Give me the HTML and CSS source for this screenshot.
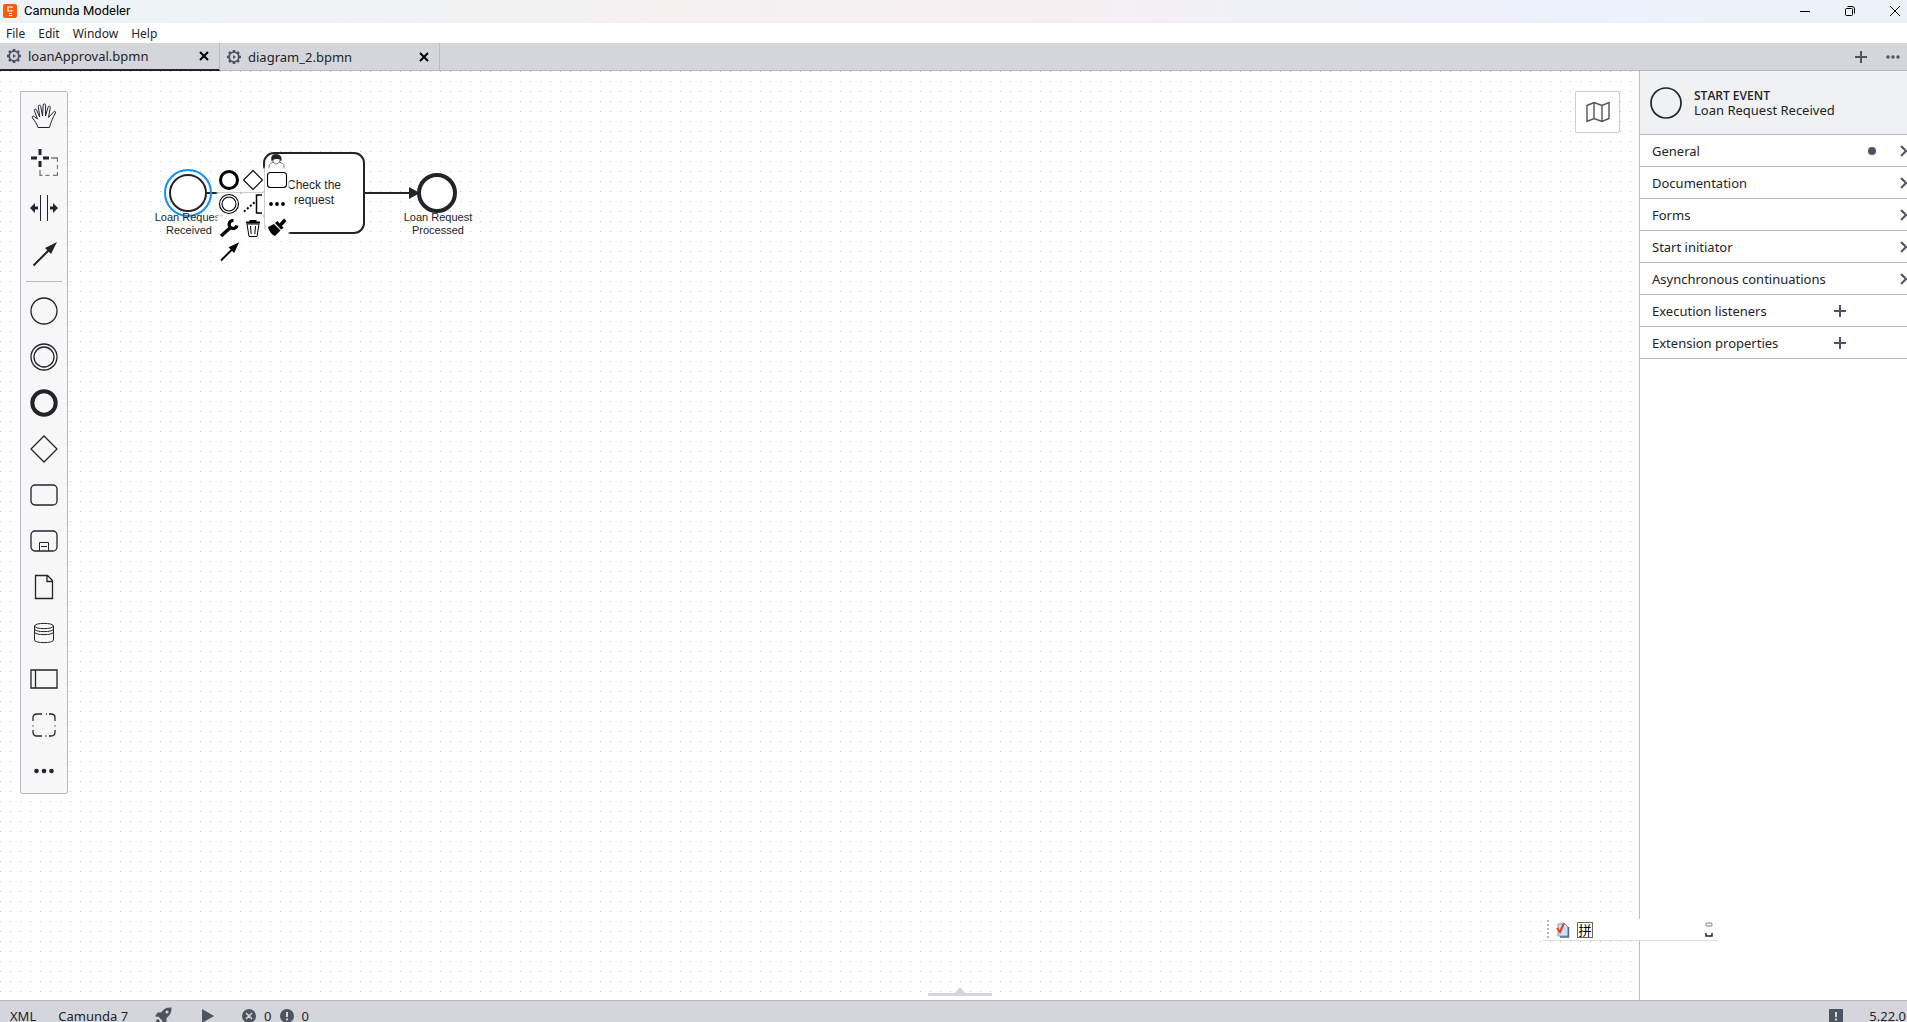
FILE: index.html
```html
<!DOCTYPE html>
<html lang="en">
<head>
    <meta charset="UTF-8">
    <meta name="viewport" content="width=device-width, initial-scale=1.0">
    <title>Camunda Modeler</title>
    <link rel="stylesheet" href="styles.css">
</head>
<body>
    <header class="title-bar">
        <svg class="app-logo" viewBox="0 0 14 14">
            <rect width="14" height="14" rx="2" fill="#fc5d0d"/>
            <path d="M9 4V3H5v4h4V6M6 9.500h3M6 11.500h3" fill="none" stroke="#fff" stroke-width="1.200"/>
        </svg>
        <span class="app-title">Camunda Modeler</span>
        <div class="window-controls">
            <button aria-label="Minimize"><svg width="12" height="12"><path d="M1 6.500h10"/></svg></button>
            <button aria-label="Restore"><svg width="12" height="12"><rect x="1.500" y="3.500" width="7" height="7" rx="1"/><path d="M3.500 1.500H8a2.500 2.500 0 0 1 2.500 2.500v4.500"/></svg></button>
            <button aria-label="Close"><svg width="12" height="12"><path d="M1 1l10 10M11 1L1 11"/></svg></button>
        </div>
    </header>

    <nav class="menu-bar">
        <button>File</button>
        <button>Edit</button>
        <button>Window</button>
        <button>Help</button>
    </nav>

    <div class="tab-bar">
        <div class="tab active">
            <svg class="gear" viewBox="0 0 16 16"><circle cx="8" cy="8" r="4.800"/><path class="teeth" d="M8 1v2M8 13v2M1 8h2M13 8h2M3 3l1.500 1.500M11.500 11.500L13 13M13 3l-1.500 1.500M4.500 11.500L3 13"/><path class="core" d="M7 6v4l3-2z"/></svg>
            <button class="tab-name">loanApproval.bpmn</button>
            <button class="tab-close" aria-label="Close loanApproval.bpmn"><svg width="10" height="10"><path d="M1 1l8 8M9 1L1 9"/></svg></button>
        </div>
        <div class="tab">
            <svg class="gear" viewBox="0 0 16 16"><circle cx="8" cy="8" r="4.800"/><path class="teeth" d="M8 1v2M8 13v2M1 8h2M13 8h2M3 3l1.500 1.500M11.500 11.500L13 13M13 3l-1.500 1.500M4.500 11.500L3 13"/><path class="core" d="M7 6v4l3-2z"/></svg>
            <button class="tab-name">diagram_2.bpmn</button>
            <button class="tab-close" aria-label="Close diagram_2.bpmn"><svg width="10" height="10"><path d="M1 1l8 8M9 1L1 9"/></svg></button>
        </div>
        <div class="tab-actions">
            <button aria-label="New tab"><svg width="12" height="12"><path d="M6 0v12M0 6h12" stroke="#4d5361" stroke-width="2"/></svg></button>
            <button aria-label="More tabs"><svg width="16" height="4" fill="#4d5361"><circle cx="3" cy="2" r="1.700"/><circle cx="8" cy="2" r="1.700"/><circle cx="13" cy="2" r="1.700"/></svg></button>
        </div>
    </div>

    <main class="workspace">
        <section class="canvas">
            <!-- process diagram -->
            <svg class="diagram" width="600" height="300">
                <g fill="none" stroke="#22242a" stroke-width="2">
                    <path d="M206 122h58M364 122h46"/>
                    <path d="M409 116v12l11-6z" fill="#22242a" stroke="none"/>
                    <circle cx="188" cy="122" r="18" fill="#fff"/>
                    <circle cx="188" cy="122" r="23" stroke="#1090fa"/>
                    <rect x="264" y="82" width="100" height="80" rx="10" fill="#fff"/>
                    <circle cx="437" cy="122" r="18" fill="#fff" stroke-width="4"/>
                </g>
                <!-- user task marker -->
                <path d="M269 98v-3c0-2 2-3 5-4M284 98v-3c0-2-2-3-5-4" fill="none" stroke="#777"/>
                <path d="M272 91c-2-5 0-8 4-8s7 3 5 8c-1-3-2-3-4-3s-4 0-5 3z" fill="#22242a"/>
                <path d="M273 89c0 3 2 4 3 4s4-1 4-4" fill="none" stroke="#777"/>
                <g class="event-label">
                    <text x="189" y="150">Loan Request</text>
                    <text x="189" y="163">Received</text>
                    <text x="438" y="150">Loan Request</text>
                    <text x="438" y="163">Processed</text>
                </g>
                <g class="task-label">
                    <text x="314" y="118">Check the</text>
                    <text x="314" y="133">request</text>
                </g>
            </svg>

            <div class="palette">
                <button aria-label="Hand tool"><svg viewBox="0 0 28 28"><path d="M8 25.500C7 22 5 19.500 2.500 16c-1-1.500.5-2.500 1.700-1.600L7.500 17 4.300 8.500C4 6.700 6 6.400 6.500 8l3.200 6.800L8.300 4.500c0-1.700 2-1.900 2.400-.2L12.500 14l.7-11c.2-1.600 2.400-1.500 2.400.2L15.500 14l2.600-9c.6-1.500 2.500-1 2.200.6L18.500 15.500l5.200-5.700c1-1.100 2.400-.2 1.800 1.200C22.500 16 21 20 19.500 25.500z" stroke-width="1"/></svg></button>
                <button aria-label="Lasso tool"><svg viewBox="0 0 28 28"><path d="M10 1v6M10 13v6M1 10h6M13 10h6" stroke-width="3"/><path d="M21 10h6.500v4M27.500 17v4M27.500 24v3.500H23M19.500 27.500h-4M12.500 27.500H10V22" stroke="#777"/></svg></button>
                <button aria-label="Space tool"><svg viewBox="0 0 28 28"><path d="M10.500 1v26M17.500 1v26" stroke-width="1"/><path d="M0 14l5-5v3.500h3v3H5V19zM28 14l-5-5v3.500h-3v3h3V19z" fill="#22242a" stroke="none"/></svg></button>
                <button aria-label="Connect"><svg viewBox="0 0 28 28"><path d="M3.500 25.500L19 10" stroke-width="2"/><path d="M27 2L15 8l6 6z" fill="#22242a" stroke="none"/></svg></button>
                <hr>
                <button aria-label="Start event"><svg viewBox="0 0 28 28"><circle cx="14" cy="14" r="13"/></svg></button>
                <button aria-label="Intermediate event"><svg viewBox="0 0 28 28"><circle cx="14" cy="14" r="13"/><circle cx="14" cy="14" r="10"/></svg></button>
                <button aria-label="End event"><svg viewBox="0 0 28 28"><circle cx="14" cy="14" r="11.700" stroke-width="4"/></svg></button>
                <button aria-label="Gateway"><svg viewBox="0 0 28 28"><path d="M14 1l13 13-13 13L1 14z"/></svg></button>
                <button aria-label="Task"><svg viewBox="0 0 28 28"><rect x="1" y="4" width="26" height="20" rx="4"/></svg></button>
                <button aria-label="Sub-process"><svg viewBox="0 0 28 28"><rect x="1" y="4" width="26" height="20" rx="4"/><path d="M9.500 24v-8.500h9V24M11 19.500h6" stroke-width="1"/></svg></button>
                <button aria-label="Data object"><svg viewBox="0 0 28 28"><path d="M5.500 2.500h12l5 5v18h-17zM17 3v5.500h5.500"/></svg></button>
                <button aria-label="Data store"><svg viewBox="0 0 28 28"><path d="M4.500 7v14c0 3.500 19 3.500 19 0V7M4.500 7c0-3.500 19-3.500 19 0s-19 3.500-19 0M4.500 10c0 3.500 19 3.500 19 0M4.500 13c0 3.500 19 3.500 19 0" stroke-width="1"/></svg></button>
                <button aria-label="Pool"><svg viewBox="0 0 28 28"><path d="M1 5h26v18H1zM5.500 5v18"/></svg></button>
                <button aria-label="Group"><svg viewBox="0 0 28 28"><path d="M3 10V7q0-4 4-4h5M16 3h1M19 3h2q4 0 4 4v3M25 14.500v1M25 19v2q0 4-4 4h-2M16.500 25h-1M12 25H7q-4 0-4-4v-2M3 15.500v-1"/></svg></button>
                <button aria-label="More elements"><svg viewBox="0 0 28 28" class="solid"><circle cx="6.500" cy="14" r="2.300"/><circle cx="14" cy="14" r="2.300"/><circle cx="21.500" cy="14" r="2.300"/></svg></button>
            </div>

            <div class="context-pad">
                <button aria-label="Append end event"><svg viewBox="0 0 22 22"><circle cx="11" cy="11" r="8.500" stroke-width="3"/></svg></button>
                <button aria-label="Append gateway"><svg viewBox="0 0 22 22"><path d="M11 1.500l9.500 9.500-9.500 9.500L1.500 11z"/></svg></button>
                <button aria-label="Append task"><svg viewBox="0 0 22 22"><rect x="1.500" y="3.500" width="19" height="15" rx="3"/></svg></button>
                <button aria-label="Append intermediate event"><svg viewBox="0 0 22 22"><circle cx="11" cy="11" r="9.500"/><circle cx="11" cy="11" r="7"/></svg></button>
                <button aria-label="Add text annotation"><svg viewBox="0 0 22 22"><path d="M20 2h-5.500v18H20" stroke-width="1.500"/><path d="M2 18.500L13 9" stroke-width="2" stroke-dasharray="2 2"/></svg></button>
                <button aria-label="Append element"><svg viewBox="0 0 22 22"><g fill="#000" stroke="none"><circle cx="5" cy="11" r="1.900"/><circle cx="11" cy="11" r="1.900"/><circle cx="17" cy="11" r="1.900"/></g></svg></button>
                <button aria-label="Change element"><svg viewBox="0 0 22 22"><path d="M3 19L12 11" stroke-width="3.500"/><path d="M15.500 3.500a4 4 0 1 0 3.500 5" stroke-width="3.200"/></svg></button>
                <button aria-label="Delete"><svg viewBox="0 0 22 22"><path d="M5 7l2 12.500h8L17 7zM8.500 9l.7 8M13.500 9l-.7 8" stroke-width="1"/><path d="M4 5.500h14M7.500 4h7" stroke-width="2"/></svg></button>
                <button aria-label="Set color"><svg viewBox="0 0 22 22"><path d="M2 10l6-3 6.500 6.500L9 19c-3-1-6-5-7-9zM9 6l2.500-2 2 2.500L18 1.500 20.500 4 16 9l1.500 2-2.500 1.500z" fill="#000" stroke="none"/></svg></button>
                <button aria-label="Connect"><svg viewBox="0 0 22 22"><path d="M3 19.500L14 8.500" stroke-width="1.800"/><path d="M20 2.500l-8.500 4 4.500 4.500z" fill="#000"/></svg></button>
            </div>

            <button class="minimap-toggle" aria-label="Toggle minimap"><svg width="26" height="22"><path d="M2 4.500l7-3 8 3 7-3v16l-7 3-8-3-7 3zM9 1.500v16M17 4.500v16" fill="none" stroke="#4d5361" stroke-width="1.400"/></svg></button>
        </section>

        <aside class="properties">
            <div class="properties-header">
                <svg width="32" height="32"><circle cx="16" cy="16" r="15" fill="none" stroke="#22242a" stroke-width="1.700"/></svg>
                <div>
                    <div class="element-type">START EVENT</div>
                    <div class="element-name">Loan Request Received</div>
                </div>
            </div>
            <button class="group">General <span class="dot"></span><svg class="chevron" width="8" height="12"><path d="M1 1l5 5-5 5"/></svg></button>
            <button class="group">Documentation <svg class="chevron" width="8" height="12"><path d="M1 1l5 5-5 5"/></svg></button>
            <button class="group">Forms <svg class="chevron" width="8" height="12"><path d="M1 1l5 5-5 5"/></svg></button>
            <button class="group">Start initiator <svg class="chevron" width="8" height="12"><path d="M1 1l5 5-5 5"/></svg></button>
            <button class="group">Asynchronous continuations <svg class="chevron" width="8" height="12"><path d="M1 1l5 5-5 5"/></svg></button>
            <button class="group">Execution listeners <svg class="add" width="12" height="12"><path d="M6 0v12M0 6h12"/></svg></button>
            <button class="group">Extension properties <svg class="add" width="12" height="12"><path d="M6 0v12M0 6h12"/></svg></button>
        </aside>

        <button class="panel-handle" aria-label="Open panel"><svg width="64" height="9" fill="#d5d6db"><path d="M27 6l5-6 5 6z"/><rect y="6" width="64" height="3" rx="1"/></svg></button>
    </main>

    <footer class="status-bar">
        <button class="xml">XML</button>
        <button class="platform">Camunda 7</button>
        <button class="deploy" aria-label="Deploy"><svg width="18" height="18" viewBox="0 0 18 18"><path d="M17.500.500c-5-.3-8 1.500-10.500 5H3.500L1 9.500l3.500.3 3.700 3.700.3 3.500 4-2.500V11c3.500-2.500 5.300-5.500 5-10.500zM13 6.500A1.500 1.500 0 1 1 13 3.500a1.500 1.500 0 0 1 0 3zM4 12c-2 .5-2.500 3-2.500 4.500C3 16.500 5.500 16 6 14z" fill="#4d5361" fill-rule="evenodd"/></svg></button>
        <button class="run" aria-label="Start instance"><svg width="12" height="14"><path d="M0 0l12 7-12 7z" fill="#4d5361"/></svg></button>
        <button class="problems">
            <svg width="14" height="14"><circle cx="7" cy="7" r="7" fill="#4d5361"/><path d="M4 4l6 6M10 4l-6 6" stroke="#d5d6db" stroke-width="1.500"/></svg>
            <span>0</span>
            <svg width="14" height="14"><circle cx="7" cy="7" r="7" fill="#4d5361"/><path d="M7 3v5M7 9.500v2" stroke="#d5d6db" stroke-width="2"/></svg>
            <span>0</span>
        </button>
        <button class="feedback" aria-label="Feedback"><svg width="14" height="14"><rect width="14" height="14" rx="1" fill="#4d5361"/><path d="M7 3v5M7 9.500v2" stroke="#d5d6db" stroke-width="2"/></svg></button>
        <button class="version">5.22.0</button>
    </footer>

    <!-- floating input method bar -->
    <div class="ime-bar">
        <svg class="ime-grip" width="2" height="20"><path d="M1 0v20" stroke="#b5b5b5" stroke-width="2" stroke-dasharray="2 2"/></svg>
        <svg class="ime-logo" width="14" height="16"><path d="M2 2h7l3 3v9H2z" fill="#c5e2fb" stroke="#7c9cc4"/><path d="M12.500 5v10H4" fill="none" stroke="#53657f" stroke-width="1.500"/><path d="M1 6l3 4 4-9" fill="none" stroke="#ef3b17" stroke-width="2"/></svg>
        <button class="ime-mode">拼</button>
        <svg class="ime-options" width="8" height="16"><rect x="1" y="1" width="6" height="3" rx="1" fill="none" stroke="#777"/><path d="M1 11v3h6v-3" fill="none" stroke="#223" stroke-width="1.500"/></svg>
    </div>
</body>
</html>
```
FILE: styles.css
```css
* {
    box-sizing: border-box;
}
html {
    overflow: hidden;
}
body {
    display: flex;
    flex-direction: column;
    height: calc(100vh + 8px);
    margin: 0;
    font-family: 'Noto Sans', 'Open Sans', sans-serif;
    font-size: 13px;
    color: #22242a;
    background-color: #fff;
}
button {
    padding: 0;
    border: none;
    background: none;
    font: inherit;
    color: inherit;
    cursor: pointer;
}
svg {
    display: block;
    flex: none;
}
.title-bar {
    display: flex;
    align-items: center;
    height: 23px;
    padding: 0 6px 2px 3px;
    background: linear-gradient(90deg, #ecf4f8, #f4f1f1 35%, #f6eff2 56%, #f0f1f6 65%, #edf1fc 84%, #ebf3f8 90%);
    color: #000;
    font-family: Roboto, sans-serif;
}
.app-logo {
    width: 14px;
    height: 14px;
    margin-right: 7px;
}
.window-controls {
    display: flex;
    gap: 33px;
    margin-left: auto;
}
.window-controls svg {
    fill: none;
    stroke: #000;
}
.menu-bar {
    display: flex;
    align-items: center;
    gap: 13px;
    height: 20px;
    padding-left: 6px;
    font-size: 12px;
}
.tab-bar {
    display: flex;
    height: 28px;
    border-bottom: 1px solid #b8bac8;
    background-color: #d5d6db;
}
.tab {
    display: flex;
    align-items: center;
    width: 220px;
    height: 28px;
    padding: 0 10px 0 6px;
    border-right: 1px solid #b8bac8;
    border-bottom: 1px solid #b8bac8;
}
.tab.active {
    border-bottom: 2px solid #22242a;
}
.gear {
    width: 16px;
    height: 16px;
    margin-right: 6px;
    fill: none;
    stroke: #4d5361;
    stroke-width: 1.8;
}
.gear .core {
    fill: #4d5361;
    stroke: none;
}
.gear .teeth {
    stroke-width: 2.6;
}
.tab-close {
    margin-left: auto;
}
.tab-close svg {
    stroke: #000;
    stroke-width: 2;
}
.tab-actions {
    display: flex;
    align-items: center;
    gap: 18px;
    margin-left: auto;
    padding-right: 6px;
}
/* the panels run past the right edge of the window */
.workspace {
    position: relative;
    display: flex;
    flex: 1;
    min-height: 0;
    margin-right: -13px;
}
.canvas {
    position: relative;
    flex: 1;
    overflow: hidden;
    background: conic-gradient(from 0deg at 1px 1px, transparent 75%, #c4c4c4 0) 0 0 / 10px 10px;
}
.diagram {
    position: absolute;
    top: 0;
    left: 0;
}
.diagram text {
    font-family: 'Liberation Sans', Arial, sans-serif;
    text-anchor: middle;
    fill: #22242a;
}
.event-label {
    font-size: 11px;
}
.task-label {
    font-size: 12px;
}
.palette {
    position: absolute;
    top: 20px;
    left: 20px;
    width: 48px;
    border: 1px solid #b8bac8;
    border-radius: 2px;
    background-color: #f7f7f8;
}
.palette button {
    display: flex;
    align-items: center;
    justify-content: center;
    width: 46px;
    height: 46px;
    padding-top: 1px;
}
.palette svg {
    width: 28px;
    height: 28px;
    fill: none;
    stroke: #22242a;
    stroke-width: 1.3;
}
.palette svg.solid {
    fill: #22242a;
    stroke: none;
}
.palette hr {
    height: 1px;
    margin: 5px;
    border: none;
    background-color: #b8bac8;
}
.context-pad {
    position: absolute;
    top: 98px;
    left: 218px;
    display: grid;
    grid-template-columns: repeat(3, 22px);
    gap: 2px;
}
.context-pad button {
    width: 22px;
    height: 22px;
    background-color: #fff;
    box-shadow: 0 0 2px 1px #fff;
}
.context-pad svg {
    width: 22px;
    height: 22px;
    fill: none;
    stroke: #000;
    stroke-width: 1.1;
}
.minimap-toggle {
    position: absolute;
    top: 20px;
    right: 19px;
    display: flex;
    align-items: center;
    justify-content: center;
    width: 45px;
    height: 42px;
    border: 1px solid #ccc;
    border-radius: 2px;
    background-color: #fff;
}
.properties {
    width: 281px;
    border-left: 1px solid #b8bac8;
    background-color: #fff;
}
.properties-header {
    display: flex;
    align-items: center;
    gap: 12px;
    height: 64px;
    padding: 0 10px;
    border-bottom: 1px solid #b8bac8;
    background-color: #f0f1f3;
    line-height: 15px;
}
.element-type {
    font-family: 'Open Sans', sans-serif;
    font-size: 12px;
    font-weight: 600;
}
.group {
    display: flex;
    align-items: center;
    width: 100%;
    height: 32px;
    padding: 0 12px;
    border-bottom: 1px solid #b8bac8;
}
.group svg {
    margin-left: auto;
    fill: none;
    stroke: #4d5361;
    stroke-width: 2;
}
.group .add {
    margin-right: 62px;
}
.dot {
    width: 8px;
    height: 8px;
    margin-left: auto;
    border-radius: 50%;
    background-color: #4d5361;
}
.group .dot + svg {
    margin-left: 24px;
}
.panel-handle {
    position: absolute;
    bottom: 4px;
    left: 50%;
    transform: translateX(-50%);
}
.status-bar {
    display: flex;
    align-items: center;
    height: 30px;
    margin-right: -13px;
    padding: 0 14px 0 10px;
    border-top: 1px solid #b8bac8;
    background-color: #d5d6db;
}
.platform {
    margin-left: 22px;
}
.deploy {
    margin-left: 26px;
}
.run {
    margin-left: 30px;
}
.problems {
    display: flex;
    align-items: center;
    gap: 8px;
    margin-left: 28px;
}
.feedback {
    margin-left: auto;
}
.version {
    margin-left: 26px;
}
.ime-bar {
    position: absolute;
    top: 919px;
    left: 1543px;
    display: flex;
    align-items: center;
    width: 174px;
    height: 22px;
    padding: 0 4px;
    border-bottom: 1px solid #ddd;
    background-color: #fff;
}
.ime-logo {
    margin: 0 7px;
}
.ime-mode {
    width: 16px;
    height: 16px;
    border: 1px solid #666;
    font-family: 'Noto Sans CJK SC', sans-serif;
    font-size: 13px;
    line-height: 13px;
    color: #000;
}
.ime-options {
    margin-left: auto;
}
```
